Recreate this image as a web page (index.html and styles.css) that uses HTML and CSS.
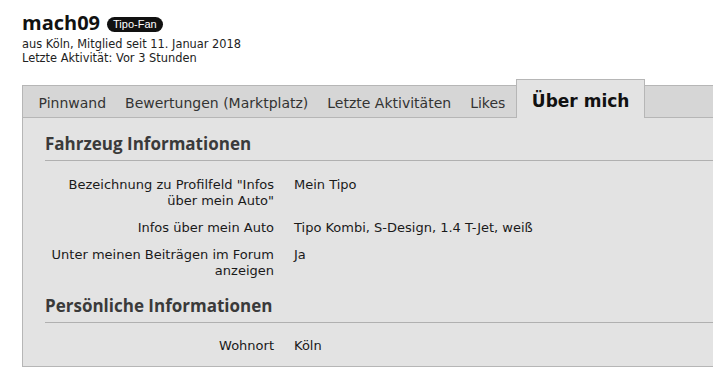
FILE: index.html
```html
<!DOCTYPE html>

<html>
  <head>
    <title>mach09 - Profil</title>

    <link rel="stylesheet" href="styles.css">
  </head>
  <body>
    <main class="profile">
      <header class="user-head">
        <h1>mach09 <span class="badge">Tipo-Fan</span></h1>
        <p class="meta">
          aus Köln, Mitglied seit 11. Januar 2018<br>
          Letzte Aktivität: Vor 3 Stunden
        </p>
      </header>

      <ul class="tabs">
        <li class="tab">Pinnwand</li>
        <li class="tab">Bewertungen (Marktplatz)</li>
        <li class="tab">Letzte Aktivitäten</li>
        <li class="tab">Likes</li>
        <li class="tab tab-active">Über mich</li>
      </ul>

      <section class="panel">
        <h3 class="section-title">Fahrzeug Informationen</h3>
        <dl class="fields">
          <dt>Bezeichnung zu Profilfeld "Infos über mein Auto"</dt>
          <dd>Mein Tipo</dd>
          <dt>Infos über mein Auto</dt>
          <dd>Tipo Kombi, S-Design, 1.4 T-Jet, weiß</dd>
          <dt>Unter meinen Beiträgen im Forum anzeigen</dt>
          <dd>Ja</dd>
        </dl>

        <h3 class="section-title">Persönliche Informationen</h3>
        <dl class="fields">
          <dt>Wohnort</dt>
          <dd>Köln</dd>
        </dl>
      </section>
    </main>
  </body>
</html>
```

FILE: styles.css
```css
* { box-sizing: border-box; }
body {
  margin: 0;
  background: white;
  color: #1a1a1a;
  font-family: "DejaVu Sans", Verdana, sans-serif;
  font-size: 13px;
  overflow: hidden;
}
.profile {
  padding: 10px 0 0 22px;
  width: 720px;
}
.user-head h1 {
  margin: 0;
  display: flex;
  align-items: center;
  gap: 7px;
  font-family: "Open Sans", sans-serif;
  font-size: 20px;
  line-height: 26px;
  color: #111;
}
.badge {
  display: inline-block;
  background: #111;
  color: white;
  font-family: "Liberation Sans", Arial, sans-serif;
  font-weight: normal;
  font-size: 11px;
  line-height: 15px;
  padding: 0 6px;
  border-radius: 8px;
  margin-top: 3px;
}
.meta {
  margin: 1px 0 0;
  font-size: 11.4px;
  line-height: 14px;
  color: #222;
}
.tabs {
  list-style: none;
  margin: 20px 0 0;
  padding: 0 0 0 6px;
  display: flex;
  align-items: flex-end;
  height: 33px;
  background: #d6d6d6;
  border: 1px solid #b6b6b6;
}
.tab {
  padding: 3px 9.5px 0;
  font-size: 14px;
  line-height: 28px;
  color: #333;
}
.tab-active {
  margin: -7px 0 -1px 1px;
  padding: 4px 15px 0;
  line-height: 34px;
  font-size: 17px;
  font-weight: bold;
  color: #111;
  background: #e3e3e3;
  border: 1px solid #b6b6b6;
  border-bottom: none;
}
.panel {
  background: #e3e3e3;
  border: 1px solid #b6b6b6;
  border-top: none;
  padding: 15px 0 12px 22px;
}
.section-title {
  margin: 0;
  padding-bottom: 5px;
  border-bottom: 1px solid #b0b0b0;
  font-family: "Open Sans", sans-serif;
  font-size: 17px;
  line-height: 22px;
  color: #3a3a3a;
}
.fields {
  display: grid;
  grid-template-columns: 229px 1fr;
  column-gap: 20px;
  row-gap: 11px;
  margin: 16px 0 16px;
  line-height: 16px;
}
.fields:last-child {
  margin: 15px 0 0;
}
.fields dt {
  text-align: right;
}
.fields dd {
  margin: 0;
}
```
